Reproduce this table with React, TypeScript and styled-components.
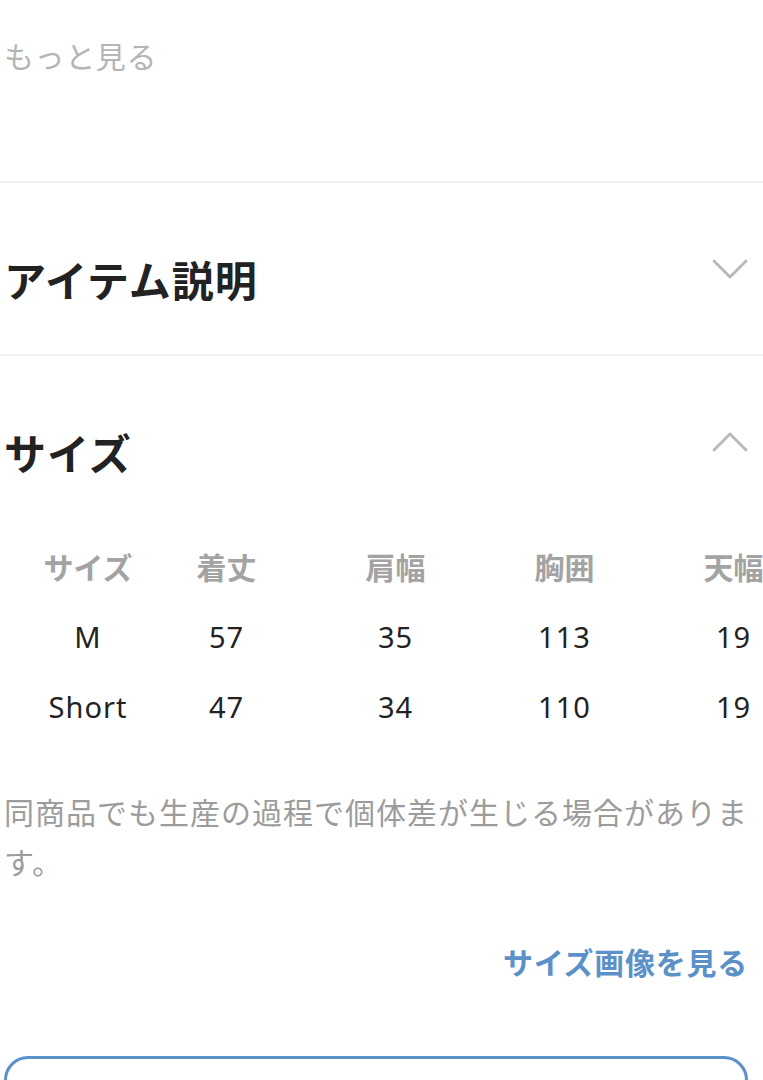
import React from 'react';
import styled, { createGlobalStyle } from 'styled-components';

const GlobalStyle = createGlobalStyle`
  html, body {
    margin: 0;
    padding: 0;
    background: #fff;
  }
  body {
    font-family: "Noto Sans CJK JP", "Noto Sans", sans-serif;
    -webkit-font-smoothing: antialiased;
  }
`;

const Screen = styled.div`
  width: 763px;
  height: 100vh;
  overflow: hidden;
  background: #fff;
`;

const MoreLink = styled.div`
  padding: 35px 0 0 4px;
  margin-bottom: 106px;
  font-size: 30px;
  line-height: 40px;
  letter-spacing: 0.6px;
  color: #b5b5b5;
`;

const Section = styled.section`
  border-top: 2px solid #f1f1f1;
`;

const SectionHeader = styled.div`
  display: flex;
  justify-content: space-between;
  align-items: flex-start;
  padding: 68px 15px 0 4px;
`;

const SectionTitle = styled.h2`
  margin: 0;
  font-size: 42px;
  line-height: 56px;
  font-weight: 700;
  letter-spacing: 1px;
  color: #222;
`;

const Closed = styled.div`
  height: 47px;
`;

const ChevronBox = styled.div`
  margin-top: 8px;
  width: 36px;
  height: 20px;
`;

const Chevron = ({ up }: { up?: boolean }) => (
  <ChevronBox>
    <svg width="36" height="20" viewBox="0 0 36 20">
      <polyline
        points={up ? '2,18 18,2 34,18' : '2,2 18,18 34,2'}
        fill="none"
        stroke="#b8b8b8"
        strokeWidth="2.8"
        strokeLinecap="round"
        strokeLinejoin="round"
      />
    </svg>
  </ChevronBox>
);

const TableWrap = styled.div`
  margin-top: 51px;
  padding-left: 4px;
  overflow: hidden;
`;

const Row = styled.div`
  display: grid;
  grid-template-columns: 138px repeat(4, 169px);
  height: 70px;
  align-items: center;
`;

const Cell = styled.div<{ head?: boolean; first?: boolean }>`
  text-align: center;
  white-space: nowrap;
  padding-left: ${(p) => (p.first ? '30px' : '0')};
  font-family: ${(p) =>
    p.head ? '"Noto Sans CJK JP", sans-serif' : '"Noto Sans", "Noto Sans CJK JP", sans-serif'};
  font-size: ${(p) => (p.head ? '30px' : '29px')};
  font-weight: ${(p) => (p.head ? 700 : 400)};
  letter-spacing: ${(p) => (p.head ? '0' : '1px')};
  color: ${(p) => (p.head ? '#a3a3a3' : '#222')};
`;

const Note = styled.p`
  margin: 45px 6px 0 4px;
  font-size: 30px;
  line-height: 50px;
  letter-spacing: 1px;
  color: #9c9c9c;
`;

const LinkRow = styled.div`
  margin-top: 53px;
  padding-right: 15px;
  text-align: right;
`;

const SizeImageLink = styled.a`
  font-size: 30px;
  line-height: 44px;
  font-weight: 700;
  letter-spacing: 0.75px;
  color: #5b90c8;
  text-decoration: none;
`;

const OutlineButton = styled.button`
  display: block;
  box-sizing: border-box;
  margin: 73px 15px 0 4px;
  width: calc(100% - 19px);
  height: 96px;
  border: 3px solid #5b90c8;
  border-radius: 24px;
  background: #fff;
`;

const headers = ['サイズ', '着丈', '肩幅', '胸囲', '天幅'];
const rows = [
  ['M', '57', '35', '113', '19'],
  ['Short', '47', '34', '110', '19'],
];

export default function App() {
  return (
    <Screen>
      <GlobalStyle />
      <MoreLink>もっと見る</MoreLink>

      <Section>
        <SectionHeader>
          <SectionTitle>アイテム説明</SectionTitle>
          <Chevron />
        </SectionHeader>
        <Closed />
      </Section>

      <Section>
        <SectionHeader>
          <SectionTitle>サイズ</SectionTitle>
          <Chevron up />
        </SectionHeader>
        <TableWrap>
          <Row>
            {headers.map((h, i) => (
              <Cell key={h} head first={i === 0}>
                {h}
              </Cell>
            ))}
          </Row>
          {rows.map((r) => (
            <Row key={r[0]}>
              {r.map((v, i) => (
                <Cell key={i} first={i === 0}>
                  {v}
                </Cell>
              ))}
            </Row>
          ))}
        </TableWrap>
        <Note>同商品でも生産の過程で個体差が生じる場合があります。</Note>
        <LinkRow>
          <SizeImageLink href="#">サイズ画像を見る</SizeImageLink>
        </LinkRow>
        <OutlineButton aria-label="購入" />
      </Section>
    </Screen>
  );
}
